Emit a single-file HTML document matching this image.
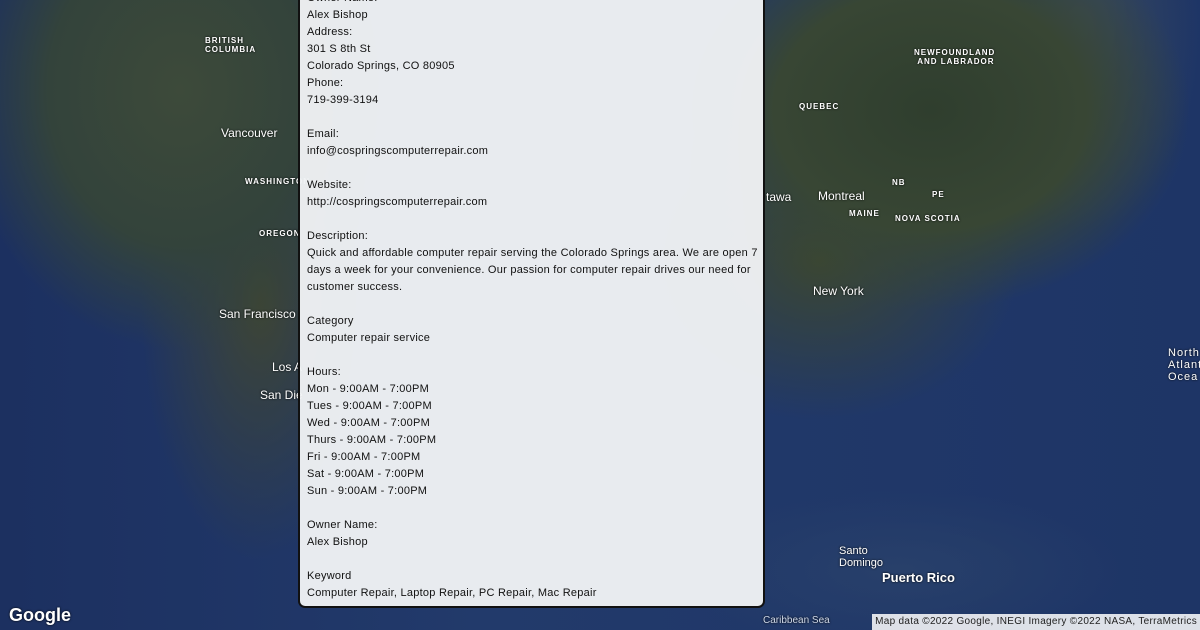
<!DOCTYPE html>
<html><head><meta charset="utf-8"><style>
html,body{margin:0;padding:0;width:1200px;height:630px;overflow:hidden}
body{position:relative;background:#1f3563;font-family:"Liberation Sans",sans-serif}
.bg{position:absolute;inset:0;background:
radial-gradient(ellipse 220px 260px at 180px 90px,#3d4a3a 0%,#33433b 60%,transparent 100%),
radial-gradient(ellipse 260px 200px at 930px 110px,#2f3e2e 0%,#384634 60%,transparent 100%),
radial-gradient(ellipse 120px 200px at 1080px 30px,#3a4a5c 0%,transparent 100%),
radial-gradient(ellipse 200px 160px at 820px 260px,#3b4632 0%,transparent 100%),
radial-gradient(ellipse 120px 260px at 260px 300px,#3e4534 0%,transparent 100%),
radial-gradient(ellipse 220px 80px at 900px 570px,#28406a 0%,transparent 100%),
linear-gradient(90deg,#1c3060 0%,#223a6b 40%,#1e3566 100%)}
.lbl{position:absolute;color:#fff;font-size:11px;text-shadow:0 0 2px #000}
.sm{font-size:8px;letter-spacing:1px;font-weight:bold}
.panel{position:absolute;left:298px;top:-10px;width:463px;height:616px;border:2px solid #111;border-top:none;border-radius:0 0 7px 7px;background:rgba(240,242,245,.96)}
.txt{position:absolute;left:307px;top:-10px;font-size:11px;line-height:17px;color:#111;white-space:pre;letter-spacing:0.25px}
.attr{position:absolute;right:0;bottom:0;background:rgba(255,255,255,.85);font-size:10px;letter-spacing:0.3px;color:#222;padding:1px 3px;height:14px;line-height:14px}
.g{position:absolute;left:9px;bottom:4px;color:#fff;font-size:18px;font-weight:bold;text-shadow:0 0 2px #000}
</style></head><body>
<div class="bg"></div>
<div class="lbl sm" style="left:205px;top:36px">BRITISH<br>COLUMBIA</div>
<div class="lbl" style="left:221px;top:126px;font-size:12px">Vancouver</div>
<div class="lbl sm" style="left:245px;top:177px">WASHINGTON</div>
<div class="lbl sm" style="left:259px;top:229px">OREGON</div>
<div class="lbl" style="left:219px;top:307px;font-size:12px">San Francisco</div>
<div class="lbl" style="left:272px;top:360px;font-size:12px">Los A</div>
<div class="lbl" style="left:260px;top:388px;font-size:12px">San Die</div>
<div class="lbl sm" style="left:914px;top:48px">NEWFOUNDLAND<br>&nbsp;AND LABRADOR</div>
<div class="lbl sm" style="left:799px;top:102px">QUEBEC</div>
<div class="lbl" style="left:818px;top:189px;font-size:12px">Montreal</div>
<div class="lbl" style="left:766px;top:190px;font-size:12px">tawa</div>
<div class="lbl sm" style="left:849px;top:209px">MAINE</div>
<div class="lbl sm" style="left:895px;top:214px">NOVA SCOTIA</div>
<div class="lbl sm" style="left:892px;top:178px">NB</div>
<div class="lbl sm" style="left:932px;top:190px">PE</div>
<div class="lbl" style="left:813px;top:284px;font-size:12px">New York</div>
<div class="lbl" style="left:839px;top:545px;font-size:11px">Santo<br>Domingo</div>
<div class="lbl" style="left:882px;top:570px;font-size:13px;font-weight:bold">Puerto Rico</div>
<div class="lbl" style="left:1168px;top:347px;font-size:11px;letter-spacing:1px">North<br>Atlant<br>Ocea</div>
<div class="lbl" style="left:763px;top:615px;font-size:10px;color:#cfd8e8">Caribbean Sea</div>
<div class="panel"></div>
<div class="txt">Owner Name:
Alex Bishop
Address:
301 S 8th St
Colorado Springs, CO 80905
Phone:
719-399-3194

Email:
info@cospringscomputerrepair.com

Website:
http://cospringscomputerrepair.com

Description:
Quick and affordable computer repair serving the Colorado Springs area. We are open 7
days a week for your convenience. Our passion for computer repair drives our need for
customer success.

Category
Computer repair service

Hours:
Mon - 9:00AM - 7:00PM
Tues - 9:00AM - 7:00PM
Wed - 9:00AM - 7:00PM
Thurs - 9:00AM - 7:00PM
Fri - 9:00AM - 7:00PM
Sat - 9:00AM - 7:00PM
Sun - 9:00AM - 7:00PM

Owner Name:
Alex Bishop

Keyword
Computer Repair, Laptop Repair, PC Repair, Mac Repair</div>
<div class="g">Google</div>
<div class="attr">Map data ©2022 Google, INEGI Imagery ©2022 NASA, TerraMetrics</div>
</body></html>
